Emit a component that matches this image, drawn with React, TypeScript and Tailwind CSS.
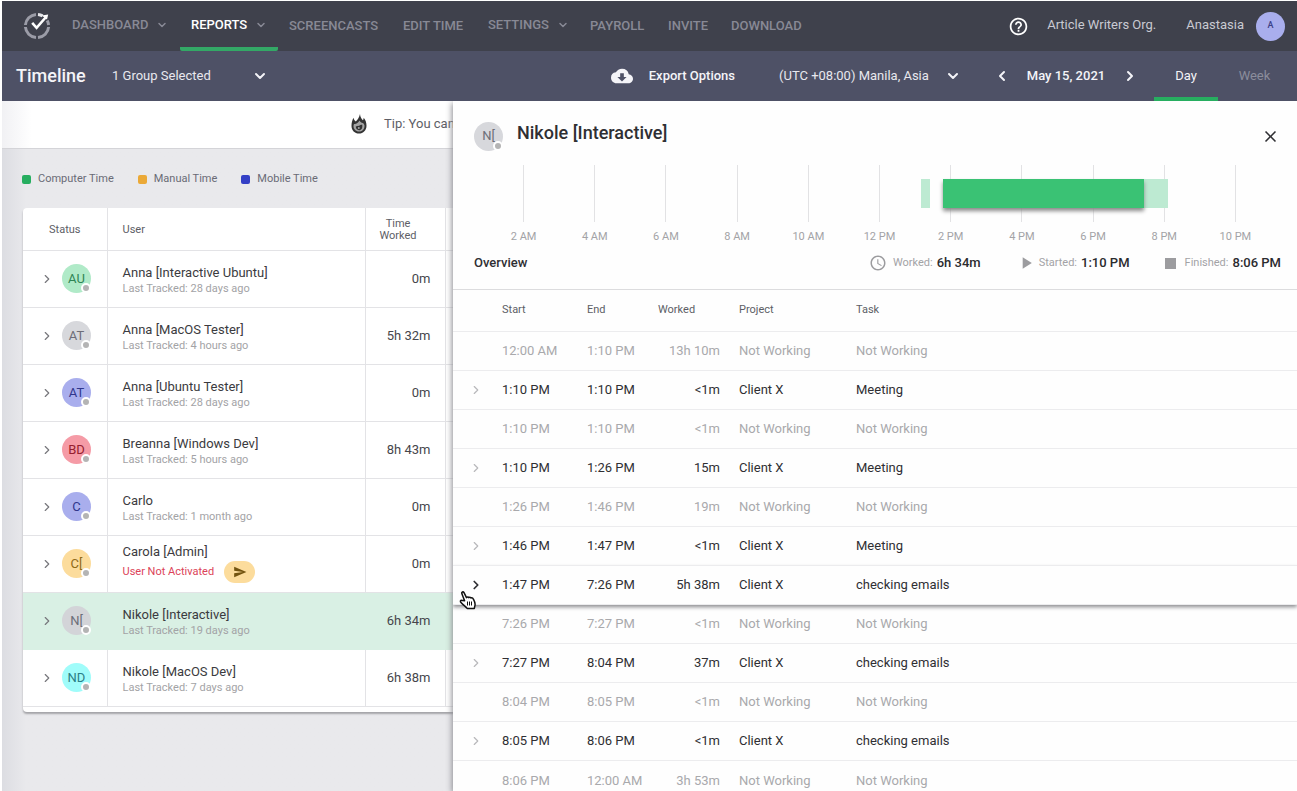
import type { ReactNode } from 'react'
import clsx from 'clsx'
import { ChevronDown, ChevronLeft, ChevronRight } from 'lucide-react'
import {
  MdAccessTime,
  MdClose,
  MdCloudDownload,
  MdHelpOutline,
  MdPlayArrow,
  MdSend,
} from 'react-icons/md'

const navItems = [
  { label: 'DASHBOARD', width: 'w-[119px]', menu: true },
  { label: 'REPORTS', width: 'w-[98px]', menu: true, active: true },
  { label: 'SCREENCASTS', width: 'w-[114px]' },
  { label: 'EDIT TIME', width: 'w-[85px]' },
  { label: 'SETTINGS', width: 'w-[102px]', menu: true },
  { label: 'PAYROLL', width: 'w-[78px]' },
  { label: 'INVITE', width: 'w-[63px]' },
  { label: 'DOWNLOAD', width: 'w-[80px]' },
]

const legend = [
  { label: 'Computer Time', color: 'bg-[#27ae60]' },
  { label: 'Manual Time', color: 'bg-[#eba937]' },
  { label: 'Mobile Time', color: 'bg-[#3440c6]' },
]

const users = [
  { initials: 'AU', color: 'bg-[#b0eac8] text-[#2f8555]', name: 'Anna [Interactive Ubuntu]', tracked: '28 days ago', worked: '0m' },
  { initials: 'AT', color: 'bg-[#d7d8dc] text-[#6d6e78]', name: 'Anna [MacOS Tester]', tracked: '4 hours ago', worked: '5h 32m' },
  { initials: 'AT', color: 'bg-[#a9aeed] text-[#30368c]', name: 'Anna [Ubuntu Tester]', tracked: '28 days ago', worked: '0m' },
  { initials: 'BD', color: 'bg-[#f59ba6] text-[#96202f]', name: 'Breanna [Windows Dev]', tracked: '5 hours ago', worked: '8h 43m' },
  { initials: 'C', color: 'bg-[#a9aeed] text-[#30368c]', name: 'Carlo', tracked: '1 month ago', worked: '0m' },
  { initials: 'C[', color: 'bg-[#fcdc9c] text-[#8f6a17]', name: 'Carola [Admin]', tracked: '', worked: '0m' },
  { initials: 'N[', color: 'bg-[#d3d4d8] text-[#6d6e78]', name: 'Nikole [Interactive]', tracked: '19 days ago', worked: '6h 34m', selected: true },
  { initials: 'ND', color: 'bg-[#a0fcfa] text-[#2a7f86]', name: 'Nikole [MacOS Dev]', tracked: '7 days ago', worked: '6h 38m' },
]

const entries = [
  { start: '12:00 AM', end: '1:10 PM', worked: '13h 10m' },
  { start: '1:10 PM', end: '1:10 PM', worked: '<1m', project: 'Client X', task: 'Meeting' },
  { start: '1:10 PM', end: '1:10 PM', worked: '<1m' },
  { start: '1:10 PM', end: '1:26 PM', worked: '15m', project: 'Client X', task: 'Meeting' },
  { start: '1:26 PM', end: '1:46 PM', worked: '19m' },
  { start: '1:46 PM', end: '1:47 PM', worked: '<1m', project: 'Client X', task: 'Meeting' },
  { start: '1:47 PM', end: '7:26 PM', worked: '5h 38m', project: 'Client X', task: 'checking emails', hover: true },
  { start: '7:26 PM', end: '7:27 PM', worked: '<1m' },
  { start: '7:27 PM', end: '8:04 PM', worked: '37m', project: 'Client X', task: 'checking emails' },
  { start: '8:04 PM', end: '8:05 PM', worked: '<1m' },
  { start: '8:05 PM', end: '8:06 PM', worked: '<1m', project: 'Client X', task: 'checking emails' },
  { start: '8:06 PM', end: '12:00 AM', worked: '3h 53m' },
]

const hours = ['2 AM', '4 AM', '6 AM', '8 AM', '10 AM', '12 PM', '2 PM', '4 PM', '6 PM', '8 PM', '10 PM']

// hours since midnight
const bars = [
  { from: 13.17, to: 13.43 },
  { from: 13.78, to: 19.43, hover: true },
  { from: 19.43, to: 20.1 },
]

// the hour grid covers 1 AM to 11 PM
const toPercent = (hour: number) => `${((hour - 1) / 22) * 100}%`

function Logo() {
  return (
    <svg width="30" height="30" viewBox="0 0 30 30" fill="none" aria-hidden="true">
      <g stroke="#9b9ca7" strokeWidth="3">
        <path d="M14 3.400A11.600 11.600 0 0 0 3.400 14" />
        <path d="M3.400 16A11.600 11.600 0 0 0 14 26.600" />
        <path d="M16 26.600A11.600 11.600 0 0 0 26.600 16" />
        <path d="M26.600 14A11.600 11.600 0 0 0 25.200 9.600" />
      </g>
      <path d="M16 3.400A11.600 11.600 0 0 1 20.600 4.900" stroke="#e6e6ea" strokeWidth="3" />
      <path d="M10.200 11.800l4.400 5L24 6" stroke="#fff" strokeWidth="2.600" />
      <path d="M19.600 4.400l6.600-.8-1.200 5z" fill="#fff" />
    </svg>
  )
}

function Flame() {
  return (
    <svg width="16" height="20" viewBox="0 0 16 20" aria-hidden="true">
      <path
        d="M9 0c.2 2.800 1.300 4.700 2.900 6.300.5-.6.800-1.400.8-2.500C14.500 5.800 15.500 8.600 15.500 11.700c0 4.500-3.200 7.800-7.500 7.800S.5 16.300.5 11.900C.5 8.700 1.300 6 2.500 3.800c.4 1.800 1.100 3 2.300 3.700C6.800 5.500 8.300 3.200 9 0z"
        fill="#333"
      />
      <path d="M8.400 6.600c1 1.700 2.200 2.400 3.600 2.300 1 .9 1.500 1.800 1.500 3.100 0 3.200-2.300 5.600-5.500 5.600s-5.500-2.400-5.500-5.500c0-.8.2-1.500.5-2.100 2 .4 4.200-1 5.400-3.400z" fill="#a4a4a4" />
      <path d="M4.800 12.600c1-.9 2-.3 3.200-.9.900-.4 1.700-1 3.200-1 .5 3-.5 5.500-3.200 5.500-2 0-3.200-1.500-3.200-3.600z" fill="#333" />
      <circle cx="7.800" cy="14" r="1" fill="#a4a4a4" />
    </svg>
  )
}

function HandCursor() {
  return (
    <svg width="18" height="20" viewBox="0 0 18 20" aria-hidden="true">
      <path
        d="M5.600 10.800L2.800 3.600C2.300 2 4.200 1.200 5 2.700l2.500 4.900c.6-.8 1.700-.8 2.200 0 .7-.7 1.800-.5 2.200.4.900-.5 1.900-.1 2.300.9.900 1.700 1.900 3.300 1.900 5.300 0 1.400-.5 2.400-.8 4.300H8.200c-.8-1.400-2.200-2.300-3.500-3.400-1.200-1-2.500-1.900-3.200-3.200-.5-1.300.8-2 2-1.300z"
        fill="#fff"
        stroke="#111"
        strokeWidth="1.500"
        strokeLinejoin="round"
      />
      <path d="M8.500 11.500v4M10.500 11.500v4M12.500 11.500v4" stroke="#111" fill="none" />
    </svg>
  )
}

function Avatar({ initials, color }: { initials: string; color: string }) {
  return (
    <span className={clsx('relative flex size-[29px] shrink-0 items-center justify-center rounded-full text-[13px]', color)}>
      {initials}
      <span className="absolute right-0 bottom-0 size-[10px] rounded-full border-2 border-white bg-[#b4b4b4]" />
    </span>
  )
}

function Select({ label, value, className }: { label: string; value: string; className: string }) {
  return (
    <span className={clsx('relative flex items-center', className)}>
      <select aria-label={label} className="w-full appearance-none bg-transparent text-[13px] text-[#e8e8ee] outline-none">
        <option>{value}</option>
      </select>
      <ChevronDown size={16} strokeWidth={3} className="pointer-events-none absolute right-0" />
    </span>
  )
}

function Stat({ icon, label, value }: { icon: ReactNode; label: string; value: string }) {
  return (
    <div className="flex items-center">
      {icon}
      <span className="mr-1 text-[11px] text-[#a3a3a6]">{label}</span>
      <span className="text-[13px] font-medium text-[#2b2b2f]">{value}</span>
    </div>
  )
}

function Header() {
  return (
    <header className="flex h-[50px] shrink-0 items-center bg-[#3f414c] pr-3 pl-5">
      <a href="#" aria-label="Home" className="w-[50px]">
        <Logo />
      </a>
      <nav className="flex self-stretch text-[13px] font-medium text-[#888995]">
        {navItems.map((item) =>
          item.menu ? (
            <button
              key={item.label}
              className={clsx(
                'flex items-center gap-2',
                item.width,
                item.active
                  ? '-ml-[11px] mr-[11px] rounded-b-xs border-y-4 border-t-transparent border-b-[#33a866] pb-[2px] pl-[11px] text-white'
                  : 'pb-[2px]'
              )}
            >
              {item.label}
              <ChevronDown size={12} strokeWidth={3} className="text-[#888995]" />
            </button>
          ) : (
            <a key={item.label} href="#" className={clsx('flex items-center', item.width)}>
              {item.label}
            </a>
          )
        )}
      </nav>
      <div className="ml-auto flex items-center text-[13px] text-[#c9cad2]">
        <button aria-label="Help">
          <MdHelpOutline size={21} className="text-white" />
        </button>
        <a href="#" className="ml-[18px] pb-[2px]">Article Writers Org.</a>
        <a href="#" className="ml-[30px] flex items-center gap-3">
          <span className="pb-[2px]">Anastasia</span>
          <span className="flex size-[29px] items-center justify-center rounded-full bg-[#a9aeed] text-[9px] font-medium text-[#3c4088]">
            A
          </span>
        </a>
      </div>
    </header>
  )
}

function Toolbar() {
  return (
    <div className="flex h-[50px] shrink-0 items-center bg-[#4e5166] pl-[14px] text-[#f4f4f8]">
      <h1 className="w-[96px] text-lg font-medium">Timeline</h1>
      <Select label="Group" value="1 Group Selected" className="w-[156px]" />
      <div className="ml-auto flex items-center self-stretch text-[13px]">
        <button className="flex items-center gap-4 font-medium">
          <MdCloudDownload size={22} />
          Export Options
        </button>
        <Select label="Time zone" value="(UTC +08:00) Manila, Asia" className="ml-[44px] w-[182px]" />
        <button aria-label="Previous day" className="ml-[33px]">
          <ChevronLeft size={16} strokeWidth={3} />
        </button>
        <button className="w-[112px] font-medium">May 15, 2021</button>
        <button aria-label="Next day">
          <ChevronRight size={16} strokeWidth={3} />
        </button>
        <button className="ml-4 w-[64px] self-stretch border-y-4 border-t-transparent border-b-[#27ae60]">Day</button>
        <button className="w-[79px] self-stretch pr-[6px] text-[#8b8d9c]">Week</button>
      </div>
    </div>
  )
}

function UserTable() {
  return (
    <div className="ml-[21px] rounded-sm bg-white pb-[5px] shadow-[0_2px_2px_#a4a4a8]">
      <table className="w-full table-fixed border-collapse">
        <colgroup>
          <col className="w-[84px]" />
          <col className="w-[258px]" />
          <col className="w-[80px]" />
          <col />
        </colgroup>
        <thead className="text-[11px] leading-3 text-[#5d5e66]">
          <tr className="h-[42px] border-b border-[#e3e3e6]">
            <th className="border-r border-[#e3e3e6] pt-[3px] font-normal">Status</th>
            <th className="border-r border-[#e3e3e6] pt-[3px] pl-[15px] text-left font-normal">User</th>
            <th className="border-r border-[#e3e3e6] pt-[3px] pr-[14px] font-normal">
              Time
              <br />
              Worked
            </th>
            <th />
          </tr>
        </thead>
        <tbody>
          {users.map((user) => (
            <tr
              key={user.name}
              className={clsx('h-[57px] border-b', user.selected ? 'border-[#d9f0e4] bg-[#d9f0e4]' : 'border-[#e3e3e6]')}
            >
              <td className={clsx('border-r', user.selected ? 'border-[#d9f0e4]' : 'border-[#e3e3e6]')}>
                <div className="flex items-center gap-2 pl-[17px]">
                  <button aria-label={`Expand ${user.name}`}>
                    <ChevronRight size={14} strokeWidth={2} className="text-[#77777c]" />
                  </button>
                  <Avatar initials={user.initials} color={user.color} />
                </div>
              </td>
              <td
                className={clsx(
                  'border-r pl-[15px]',
                  user.tracked && 'pt-1',
                  user.selected ? 'border-[#d9f0e4]' : 'border-[#e3e3e6]'
                )}
              >
                <p className="text-[13px] leading-4 text-[#3b3b40]">{user.name}</p>
                {user.tracked ? (
                  <p className="text-[11px] leading-4 text-[#a3a3a6]">Last Tracked: {user.tracked}</p>
                ) : (
                  <div className="mt-px flex items-center gap-[10px] text-[11px] text-[#dc4359]">
                    User Not Activated
                    <button
                      aria-label="Resend invite"
                      className="flex h-[22px] w-[31px] items-center justify-center rounded-full bg-[#fcdc9c] text-[#735410]"
                    >
                      <MdSend size={14} />
                    </button>
                  </div>
                )}
              </td>
              <td
                className={clsx(
                  'border-r pr-[14px] text-right text-[13px] text-[#46464b]',
                  user.selected ? 'border-[#d9f0e4]' : 'border-[#e3e3e6]'
                )}
              >
                {user.worked}
              </td>
              <td />
            </tr>
          ))}
        </tbody>
      </table>
    </div>
  )
}

function DayChart() {
  return (
    <div className="relative mr-[26px] ml-[35px]">
      <div className="grid grid-cols-11">
        {hours.map((hour) => (
          <div key={hour} className="flex flex-col items-center text-[11px] text-[#a3a3a6]">
            <span className="h-[57px] w-px bg-[#e2e2e4]" />
            <span className="mt-[7px] leading-4">{hour}</span>
          </div>
        ))}
      </div>
      {bars.map((bar) => (
        <span
          key={bar.from}
          className={clsx(
            'absolute top-[14px] h-[29px]',
            bar.hover ? 'z-10 bg-[#3ac274] shadow-[0_3px_4px_#8a8a8a]' : 'bg-[#bdead2]'
          )}
          style={{ left: toPercent(bar.from), width: `${((bar.to - bar.from) / 22) * 100}%` }}
        />
      ))}
    </div>
  )
}

function EntryTable() {
  return (
    <table className="w-full table-fixed border-collapse border-t border-[#dcdcde] text-left">
      <colgroup>
        <col className="w-[49px]" />
        <col className="w-[85px]" />
        <col className="w-[71px]" />
        <col className="w-[81px]" />
        <col className="w-[117px]" />
        <col />
      </colgroup>
      <thead className="text-[11px] text-[#5d5e66]">
        <tr className="h-[42px]">
          <th />
          <th className="font-normal">Start</th>
          <th className="font-normal">End</th>
          <th className="font-normal">Worked</th>
          <th className="font-normal">Project</th>
          <th className="font-normal">Task</th>
        </tr>
      </thead>
      <tbody className="text-[13px]">
        {entries.map((entry, index) => (
          <tr
            key={index}
            className={clsx(
              'h-[39px] border-t border-[#ececee]',
              entry.project ? 'text-[#2f2f33]' : 'text-[#a9a9ac]',
              entry.hover && 'shadow-[0_2px_4px_#88888c]'
            )}
          >
            <td className="relative pl-4">
              {entry.project && (
                <button aria-label={`Expand ${entry.start}`} className="block">
                  <ChevronRight
                    size={14}
                    strokeWidth={entry.hover ? 3 : 2}
                    className={entry.hover ? 'text-[#2f2f33]' : 'text-[#b8b8bb]'}
                  />
                </button>
              )}
              {entry.hover && (
                <span className="absolute top-6 left-[6px] z-10">
                  <HandCursor />
                </span>
              )}
            </td>
            <td>{entry.start}</td>
            <td>{entry.end}</td>
            <td className="pr-[19px] text-right">{entry.worked}</td>
            <td>{entry.project ?? 'Not Working'}</td>
            <td>{entry.task ?? 'Not Working'}</td>
          </tr>
        ))}
      </tbody>
    </table>
  )
}

function Drawer() {
  return (
    <aside className="absolute inset-y-0 right-0 left-[451px] bg-[#fefefe] shadow-[-1px_2px_6px_#8c8c92]">
      <div className="h-full overflow-hidden">
        <div className="flex h-16 items-center pt-[6px] pr-[17px] pl-[21px]">
          <Avatar initials="N[" color="bg-[#d7d8dc] text-[#6d6e78]" />
          <h2 className="ml-[14px] pb-[6px] text-lg font-medium text-[#2f2f33]">Nikole [Interactive]</h2>
          <button aria-label="Close" className="ml-auto text-[#2f2f33]">
            <MdClose size={19} />
          </button>
        </div>
        <DayChart />
        <div className="flex h-11 items-center justify-between pr-4 pb-2 pl-[21px]">
          <h3 className="text-[13px] font-medium text-[#2f2f33]">Overview</h3>
          <div className="flex items-center gap-[35px]">
            <Stat icon={<MdAccessTime size={18} className="mr-[6px] text-[#9c9c9f]" />} label="Worked:" value="6h 34m" />
            <Stat icon={<MdPlayArrow size={20} className="mr-[3px] text-[#9c9c9f]" />} label="Started:" value="1:10 PM" />
            <Stat icon={<span className="mr-[9px] size-[11px] bg-[#9c9c9f]" />} label="Finished:" value="8:06 PM" />
          </div>
        </div>
        <EntryTable />
      </div>
    </aside>
  )
}

export default function App() {
  return (
    <div className="flex h-screen flex-col overflow-hidden bg-white pt-px pl-[2px] font-[Roboto,sans-serif]">
      <Header />
      <Toolbar />
      <main className="relative min-h-0 flex-1 overflow-hidden bg-linear-to-r from-[#dcdde2] to-[#e9e9ec] to-[24px]">
        <div className="flex h-12 items-center gap-[17px] border-b border-[#d4d4d8] bg-linear-to-r from-[#f1f1f4] to-white to-[30px] pb-[2px] pl-[349px] text-[13px] text-[#5d5e66]">
          <Flame />
          Tip: You can
        </div>
        <div className="flex h-[59px] items-center gap-6 pt-px pl-[20px] text-[11px] text-[#6a6b76]">
          {legend.map((item) => (
            <span key={item.label} className="flex items-center gap-[7px]">
              <span className={clsx('size-[9px] rounded-xs', item.color)} />
              {item.label}
            </span>
          ))}
        </div>
        <UserTable />
        <Drawer />
      </main>
    </div>
  )
}
